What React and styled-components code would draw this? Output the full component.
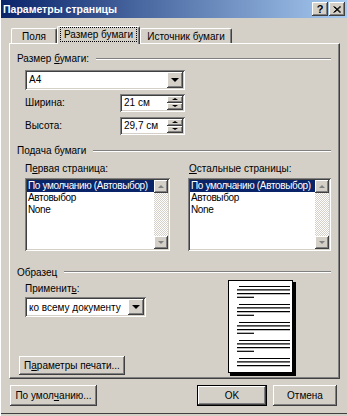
import React from "react";
import styled, { createGlobalStyle, css } from "styled-components";

const GlobalStyle = createGlobalStyle`
  html, body {
    margin: 0;
    padding: 0;
    background: #d4d0c8;
  }
  body {
    font-family: "Liberation Sans", Arial, sans-serif;
  }
`;

const raised = css`
  box-shadow: inset -1px -1px #404040, inset 1px 1px #fff,
    inset -2px -2px #808080, inset 2px 2px #d4d0c8;
`;

const sunken = css`
  box-shadow: inset 1px 1px #808080, inset -1px -1px #fff,
    inset 2px 2px #404040, inset -2px -2px #d4d0c8;
`;

const Window = styled.div`
  width: 347px;
  height: 416px;
  box-sizing: border-box;
  padding-left: 1px;
  background: #d4d0c8;
  display: flex;
  flex-direction: column;
  font-size: 10px;
  color: #000;
  box-shadow: inset 1px 0 #fff, inset 0 -2px #d4d0c8, inset 0 -3px #404040;
`;

const TitleBar = styled.div`
  height: 18px;
  display: flex;
  align-items: center;
  padding: 0 2px 0 2px;
  background: linear-gradient(to right, #0a246a, #a6caf0);
  color: #fff;
  font-weight: bold;
  font-size: 10.5px;
`;

const Caption = styled.div`
  flex: 1;
  white-space: nowrap;
`;

const CaptionButton = styled.div`
  width: 16px;
  height: 14px;
  margin-left: 1px;
  box-sizing: border-box;
  background: #d4d0c8;
  ${raised};
  display: flex;
  align-items: center;
  justify-content: center;
  color: #000;
  font-weight: bold;
  font-size: 11px;
  line-height: 1;
`;

const Body = styled.div`
  flex: 1;
  display: flex;
  flex-direction: column;
  padding: 7px 7px 0 8px;
`;

const TabRow = styled.div`
  height: 18px;
  display: flex;
  align-items: flex-end;
  padding-left: 2px;
  position: relative;
  z-index: 1;
`;

const Tab = styled.div`
  box-sizing: border-box;
  width: ${(p) => p.$w}px;
  height: ${(p) => (p.$active ? 18 : 15)}px;
  margin-bottom: ${(p) => (p.$active ? -1 : 0)}px;
  padding-bottom: ${(p) => (p.$active ? 2 : 0)}px;
  display: flex;
  align-items: center;
  justify-content: center;
  background: #d4d0c8;
  border-top: 1px solid #fff;
  border-left: 1px solid #fff;
  border-right: 1px solid #404040;
  border-radius: 2px 2px 0 0;
  box-shadow: inset -1px 0 #808080;
  white-space: nowrap;
`;

const FocusText = styled.span`
  outline: 1px dotted #000;
  outline-offset: 1px;
  padding: 0 2px;
`;

const Panel = styled.div`
  box-sizing: border-box;
  height: 336px;
  border-top: 1px solid #fff;
  border-left: 1px solid #fff;
  border-right: 1px solid #404040;
  border-bottom: 1px solid #404040;
  box-shadow: inset -1px -1px #808080;
  padding: 8px 8px 0 7px;
  display: flex;
  flex-direction: column;
`;

const GroupHeader = styled.div`
  display: flex;
  align-items: center;
  height: 14px;
  margin-top: ${(p) => p.$top || 0}px;
  white-space: nowrap;

  &::after {
    content: "";
    flex: 1;
    height: 0;
    border-top: 1px solid #808080;
    border-bottom: 1px solid #fff;
    margin-left: 7px;
  }
`;

const GroupBody = styled.div`
  padding-left: 8px;
  display: flex;
  flex-direction: column;
`;

const U = styled.span`
  text-decoration: underline;
`;

const Combo = styled.div`
  box-sizing: border-box;
  width: ${(p) => p.$w}px;
  height: 20px;
  margin-top: ${(p) => p.$top || 0}px;
  padding: 2px;
  background: #fff;
  ${sunken};
  display: flex;
  align-items: stretch;
`;

const FieldText = styled.div`
  flex: 1;
  display: flex;
  align-items: center;
  padding-left: 2px;
  white-space: nowrap;
  overflow: hidden;
`;

const DropButton = styled.div`
  width: 16px;
  box-sizing: border-box;
  background: #d4d0c8;
  ${raised};
  display: flex;
  align-items: center;
  justify-content: center;
`;

const Arrow = styled.span`
  width: 0;
  height: 0;
  border-left: ${(p) => p.$s}px solid transparent;
  border-right: ${(p) => p.$s}px solid transparent;
  ${(p) =>
    p.$up
      ? css`
          border-bottom: ${p.$h}px solid ${p.$c || "#000"};
        `
      : css`
          border-top: ${p.$h}px solid ${p.$c || "#000"};
        `}
`;

const FieldRow = styled.div`
  display: flex;
  align-items: center;
  height: 18px;
  margin-top: ${(p) => p.$top}px;
`;

const FieldLabel = styled.div`
  width: 95px;
`;

const Spin = styled.div`
  box-sizing: border-box;
  width: 65px;
  height: 18px;
  padding: 2px;
  background: #fff;
  ${sunken};
  display: flex;
`;

const SpinButtons = styled.div`
  width: 16px;
  display: flex;
  flex-direction: column;
`;

const SpinButton = styled.div`
  flex: 1;
  box-sizing: border-box;
  background: #d4d0c8;
  ${raised};
  display: flex;
  align-items: center;
  justify-content: center;
`;

const Columns = styled.div`
  display: flex;
  gap: ${(p) => p.$gap}px;
  margin-top: ${(p) => p.$top || 0}px;
`;

const Column = styled.div`
  width: ${(p) => p.$w}px;
  display: flex;
  flex-direction: column;
`;

const Label = styled.div`
  height: 13px;
  line-height: 13px;
  white-space: nowrap;
  margin-top: ${(p) => p.$top || 0}px;
  margin-left: ${(p) => p.$left || 0}px;
`;

const ListBox = styled.div`
  box-sizing: border-box;
  height: 73px;
  margin-top: 3px;
  padding: 2px;
  background: #fff;
  ${sunken};
  display: flex;
`;

const ListItems = styled.div`
  flex: 1;
  overflow: hidden;
`;

const ListItem = styled.div`
  height: 12px;
  line-height: 12px;
  padding-left: 1px;
  letter-spacing: -0.35px;
  white-space: nowrap;
  overflow: hidden;
  ${(p) =>
    p.$selected &&
    css`
      background: #0a246a;
      color: #fff;
    `}
`;

const ScrollBar = styled.div`
  width: 14px;
  display: flex;
  flex-direction: column;
`;

const ScrollTrack = styled.div`
  flex: 1;
  background-color: #fff;
  background-image: conic-gradient(#d4d0c8 25%, #fff 0 50%, #d4d0c8 0 75%, #fff 0);
  background-size: 2px 2px;
`;

const ScrollButton = styled.div`
  height: 13px;
  box-sizing: border-box;
  background: #d4d0c8;
  ${raised};
  display: flex;
  align-items: center;
  justify-content: center;
`;

const SampleArea = styled.div`
  flex: 1;
  display: flex;
`;

const SampleLeft = styled.div`
  flex: 1;
  display: flex;
  flex-direction: column;
  padding-bottom: 3px;
`;

const SampleRight = styled.div`
  width: 103px;
  padding-top: 1px;
`;

const Button = styled.div`
  box-sizing: border-box;
  width: ${(p) => p.$w}px;
  height: ${(p) => p.$h || 21}px;
  margin-left: ${(p) => p.$left || 0}px;
  background: #d4d0c8;
  ${raised};
  ${(p) =>
    p.$default &&
    css`
      border: 1px solid #000;
    `}
  display: flex;
  align-items: center;
  justify-content: center;
  white-space: nowrap;
`;

const PrintButton = styled(Button)`
  margin-top: auto;
`;

const Footer = styled.div`
  display: flex;
  justify-content: space-between;
  margin-top: 6px;
  padding: 0 3px 0 1px;
`;

const FooterRight = styled.div`
  display: flex;
  gap: 6px;
`;

const CloseIcon = () => (
  <svg width="8" height="7" viewBox="0 0 8 7">
    <path d="M0.5 0.5 L7 6.5 M1.5 0.5 L8 6.5 M7 0.5 L0.5 6.5 M8 0.5 L1.5 6.5" stroke="#000" strokeWidth="1" />
  </svg>
);

const PagePreview = () => {
  const paragraphs = [0, 1, 2, 3, 4];
  return (
    <svg width="68" height="96" viewBox="0 0 68 96">
      <rect x="2" y="2" width="66" height="94" fill="#000" />
      <rect x="0.5" y="0.5" width="64" height="92" fill="#fff" stroke="#000" />
      {paragraphs.map((k) => {
        const y = 18 * k;
        return (
          <g key={k} stroke="#000" strokeWidth="1.2">
            <line x1="11" x2="62" y1={y + 6.5} y2={y + 6.5} />
            <line x1="9" x2="62" y1={y + 9.8} y2={y + 9.8} />
            <line x1="9" x2="62" y1={y + 13.7} y2={y + 13.7} />
            {k < 4 && <line x1="9" x2="26" y1={y + 17.3} y2={y + 17.3} />}
          </g>
        );
      })}
    </svg>
  );
};

const List = ({ items }) => (
  <ListBox>
    <ListItems>
      {items.map((item, i) => (
        <ListItem key={item} $selected={i === 0}>
          {item}
        </ListItem>
      ))}
    </ListItems>
    <ScrollBar>
      <ScrollButton>
        <Arrow $up $s={3} $h={3} $c="#808080" />
      </ScrollButton>
      <ScrollTrack />
      <ScrollButton>
        <Arrow $s={3} $h={3} $c="#808080" />
      </ScrollButton>
    </ScrollBar>
  </ListBox>
);

const SpinField = ({ value }) => (
  <Spin>
    <FieldText>{value}</FieldText>
    <SpinButtons>
      <SpinButton>
        <Arrow $up $s={3} $h={2} />
      </SpinButton>
      <SpinButton>
        <Arrow $s={3} $h={2} />
      </SpinButton>
    </SpinButtons>
  </Spin>
);

const trays = ["По умолчанию (Автовыбор)", "Автовыбор", "None"];

export default function App() {
  return (
    <>
      <GlobalStyle />
      <Window>
        <TitleBar>
          <Caption>Параметры страницы</Caption>
          <CaptionButton>?</CaptionButton>
          <CaptionButton>
            <CloseIcon />
          </CaptionButton>
        </TitleBar>
        <Body>
          <TabRow>
            <Tab $w={46}>Поля</Tab>
            <Tab $w={83} $active>
              <FocusText>Размер бумаги</FocusText>
            </Tab>
            <Tab $w={92}>Источник бумаги</Tab>
          </TabRow>
          <Panel>
            <GroupHeader>
              <span>
                Размер <U>б</U>умаги:
              </span>
            </GroupHeader>
            <GroupBody>
              <Combo $w={160} $top={4}>
                <FieldText>A4</FieldText>
                <DropButton>
                  <Arrow $s={4} $h={4} />
                </DropButton>
              </Combo>
              <FieldRow $top={4}>
                <FieldLabel>Ширина:</FieldLabel>
                <SpinField value="21 см" />
              </FieldRow>
              <FieldRow $top={5}>
                <FieldLabel>Высота:</FieldLabel>
                <SpinField value="29,7 см" />
              </FieldRow>
            </GroupBody>

            <GroupHeader $top={9}>
              <span>Подача бумаги</span>
            </GroupHeader>
            <GroupBody>
              <Columns $gap={18}>
                <Column $w={145}>
                  <Label $top={5}>
                    П<U>е</U>рвая страница:
                  </Label>
                  <List items={trays} />
                </Column>
                <Column $w={143}>
                  <Label $top={5} $left={1}>
                    <U>О</U>стальные страницы:
                  </Label>
                  <List items={trays} />
                </Column>
              </Columns>
            </GroupBody>

            <GroupHeader $top={14}>
              <span>Образец</span>
            </GroupHeader>
            <SampleArea>
              <SampleLeft>
                <Label $top={3} $left={8}>
                  Применит<U>ь</U>:
                </Label>
                <GroupBody>
                  <Combo $w={121} $top={2}>
                    <FieldText>ко всему документу</FieldText>
                    <DropButton>
                      <Arrow $s={4} $h={4} />
                    </DropButton>
                  </Combo>
                </GroupBody>
                <PrintButton $w={106} $h={19} $left={2}>
                  П<U>а</U>раметры печати...
                </PrintButton>
              </SampleLeft>
              <SampleRight>
                <PagePreview />
              </SampleRight>
            </SampleArea>
          </Panel>
          <Footer>
            <Button $w={87}>
              По умол<U>ч</U>анию...
            </Button>
            <FooterRight>
              <Button $w={70} $default>
                OK
              </Button>
              <Button $w={64}>Отмена</Button>
            </FooterRight>
          </Footer>
        </Body>
      </Window>
    </>
  );
}
